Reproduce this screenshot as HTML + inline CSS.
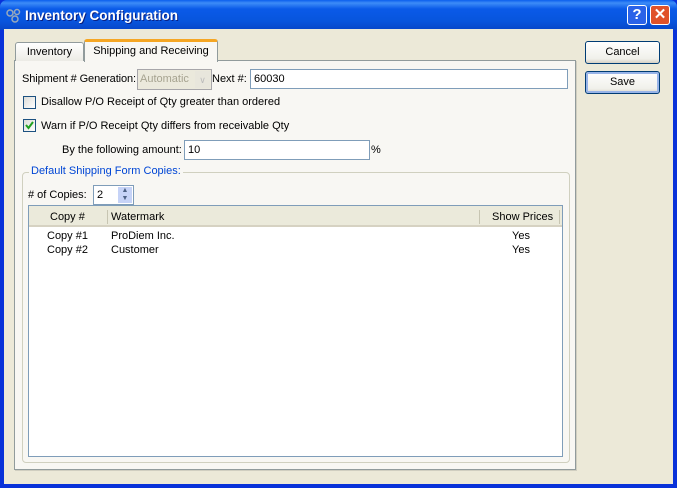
<!DOCTYPE html>
<html><head><meta charset="utf-8"><style>
*{box-sizing:border-box;margin:0;padding:0}
body{width:677px;height:488px;overflow:hidden;background:#0831d9;font-family:"Liberation Sans",sans-serif;font-size:11px;color:#000;position:relative}
.a{position:absolute}
.title{left:0;top:0;width:677px;height:30px;background:linear-gradient(#0a5fee 0%,#3d8cf7 10%,#0a5ae8 30%,#0855dd 70%,#0746c8 100%);border-radius:7px 7px 0 0}
.client{left:4px;top:29px;width:669px;height:455px;background:#ece9d8}
.tb{width:20px;height:20px;top:5px;border:1px solid #fff;border-radius:3px;color:#fff;font-weight:bold;font-size:15px;text-align:center;line-height:18px}
.btn{left:585px;width:75px;height:23px;border:1px solid #003c74;border-radius:3px;background:linear-gradient(#fff,#f0f0ea 80%,#d6d0c5);text-align:center;line-height:21px}
.panel{left:14px;top:60px;width:562px;height:410px;background:#f8f7f3;border:1px solid #919b9c;box-shadow:1px 1px 0 #d0cec0}
.inp{background:#fff;border:1px solid #7f9db9;height:20px;line-height:18px;padding-left:3px}
.cb{width:13px;height:13px;border:1px solid #1c5180;background:linear-gradient(135deg,#dcdcd7,#fff)}
.hd{background:#ebeadb;height:21px;line-height:22px;border-bottom:2px solid #d6d2c2}
</style></head><body>
<div class="a title"></div>
<svg class="a" style="left:6px;top:8px" width="16" height="16"><circle cx="4" cy="5" r="3" fill="none" stroke="#9ab" stroke-width="1.5"/><circle cx="11" cy="4" r="2.5" fill="none" stroke="#9ab" stroke-width="1.5"/><circle cx="9" cy="11" r="3" fill="none" stroke="#9ab" stroke-width="1.5"/></svg>
<div class="a" style="left:25px;top:8px;color:#fff;font-weight:bold;font-size:13.5px;text-shadow:1px 1px #0a1f80">Inventory Configuration</div>
<div class="a tb" style="left:627px;background:#2a62e8">?</div>
<div class="a tb" style="left:650px;background:#e0522a">✕</div>
<div class="a client"></div>
<div class="a btn" style="top:41px">Cancel</div>
<div class="a btn" style="top:71px;box-shadow:inset 0 0 0 2px #98b4e8">Save</div>
<div class="a panel"></div>
<div class="a" style="left:15px;top:42px;width:69px;height:19px;border:1px solid #919b9c;border-bottom:none;border-radius:3px 3px 0 0;background:linear-gradient(#fff,#ecebe5);text-align:center;line-height:18px">Inventory</div>
<div class="a" style="left:84px;top:39px;width:134px;height:23px;border:1px solid #919b9c;border-top:3px solid #f5a623;border-bottom:none;border-radius:3px 3px 0 0;background:#f8f7f3;text-align:center;line-height:18px">Shipping and Receiving</div>
<div class="a" style="left:22px;top:73px;letter-spacing:-0.1px">Shipment # Generation:</div>
<div class="a" style="left:137px;top:69px;width:75px;height:21px;border:1px solid #a7a6aa;background:#ebe9dc;color:#a6a390;line-height:19px;padding-left:2px">Automatic<span class="a" style="right:1px;top:1px;width:15px;height:17px;background:#e8e6dc;color:#bbb;font-size:9px;text-align:center">∨</span></div>
<div class="a" style="left:212px;top:73px">Next #:</div>
<div class="a inp" style="left:250px;top:69px;width:318px">60030</div>
<div class="a cb" style="left:23px;top:96px"></div>
<div class="a" style="left:41px;top:96px">Disallow P/O Receipt of Qty greater than ordered</div>
<div class="a cb" style="left:23px;top:119px"></div>
<svg class="a" style="left:24px;top:120px" width="11" height="11"><path d="M2 5 L4.5 8 L9 2" fill="none" stroke="#21a121" stroke-width="2"/></svg>
<div class="a" style="left:41px;top:120px">Warn if P/O Receipt Qty differs from receivable Qty</div>
<div class="a" style="left:62px;top:144px">By the following amount:</div>
<div class="a inp" style="left:184px;top:140px;width:186px">10</div>
<div class="a" style="left:371px;top:144px">%</div>
<div class="a" style="left:22px;top:172px;width:548px;height:291px;border:1px solid #d0d0bf;border-radius:4px"></div>
<div class="a" style="left:29px;top:165px;background:#f8f7f3;color:#0046d5;padding:0 2px">Default Shipping Form Copies:</div>
<div class="a" style="left:28px;top:189px"># of Copies:</div>
<div class="a inp" style="left:93px;top:185px;width:41px;height:20px">2<span class="a" style="right:1px;top:1px;width:14px;height:16px;background:#c6d3f7;color:#4d6185;font-size:7px;line-height:8px;text-align:center">▲<br>▼</span></div>
<div class="a" style="left:28px;top:205px;width:535px;height:252px;border:1px solid #7f9db9;background:#fff">
<div class="hd" style="position:relative">
<span class="a" style="left:21px">Copy #</span>
<span class="a" style="left:78px;top:4px;height:14px;border-left:1px solid #c7c5b2"></span>
<span class="a" style="left:82px">Watermark</span>
<span class="a" style="left:450px;top:4px;height:14px;border-left:1px solid #c7c5b2"></span>
<span class="a" style="left:463px">Show Prices</span>
<span class="a" style="left:530px;top:4px;height:14px;border-left:1px solid #c7c5b2"></span>
</div>
<div class="a" style="left:18px;top:24px">Copy #1</div><div class="a" style="left:82px;top:24px">ProDiem Inc.</div><div class="a" style="left:483px;top:24px">Yes</div>
<div class="a" style="left:18px;top:38px">Copy #2</div><div class="a" style="left:82px;top:38px">Customer</div><div class="a" style="left:483px;top:38px">Yes</div>
</div>
</body></html>
